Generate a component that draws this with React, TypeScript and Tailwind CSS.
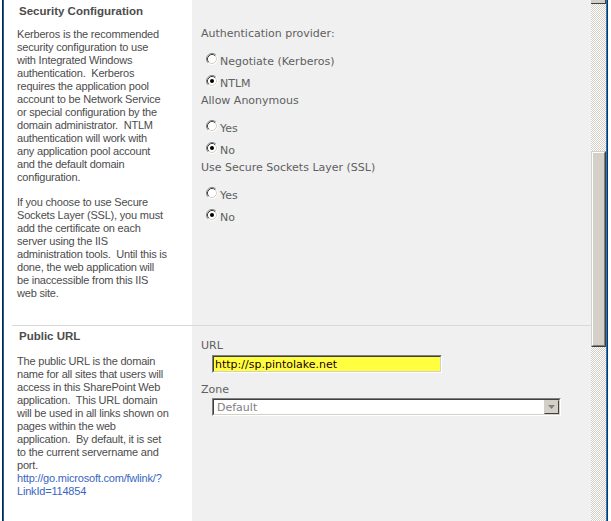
import React from "react";

const Radio = ({ checked }: { checked?: boolean }) => (
    <svg width="12" height="12" viewBox="0 0 12 12" className="-mt-[5px] shrink-0">
        <circle cx="6" cy="6" r="5" fill="#ffffff" />
        <path d="M2.11 9.89 A5.5 5.5 0 0 1 9.89 2.11" fill="none" stroke="#808080" strokeWidth="1" />
        <path d="M9.89 2.11 A5.5 5.5 0 0 1 2.11 9.89" fill="none" stroke="#ffffff" strokeWidth="1" />
        <path d="M2.82 9.18 A4.5 4.5 0 0 1 9.18 2.82" fill="none" stroke="#404040" strokeWidth="1" />
        <path d="M9.18 2.82 A4.5 4.5 0 0 1 2.82 9.18" fill="none" stroke="#d4d0c8" strokeWidth="1" />
        {checked && <circle cx="6" cy="6" r="2" fill="#000000" />}
    </svg>
);

const Option = ({ label, checked }: { label: string, checked?: boolean }) => (
    <div className="ml-[5px] flex h-[22px] items-center gap-[2px]">
        <Radio checked={checked} />
        <span className="leading-[13px]">{label}</span>
    </div>
);

const Label = ({ children }: { children: React.ReactNode }) => (
    <div className="mb-[10px] leading-[13px]">{children}</div>
);

const Lines = ({ lines }: { lines: string[] }) => (
    <>
        {lines.map((l, i) => (
            <div key={i} className="whitespace-pre">{l}</div>
        ))}
    </>
);

const Inset = ({ className, inner, children }: { className: string, inner: string, children: React.ReactNode }) => (
    <div className={`border border-t-[#808080] border-l-[#808080] border-b-white border-r-white ${className}`}>
        <div className={`flex h-full items-center border border-t-[#404040] border-l-[#404040] border-b-[#d4d0c8] border-r-[#d4d0c8] ${inner}`}>
            {children}
        </div>
    </div>
);

const Scrollbar = () => (
    <div className="flex w-[15px] flex-col">
        <div className="h-[4px] border-b border-r border-[#404040] bg-[#d4d0c8]" />
        <div className="h-[147px] bg-[image:repeating-conic-gradient(#d4d0c8_0%_25%,#ffffff_0%_50%)] bg-[length:2px_2px]" />
        <div className="h-[196px] border border-t-[#d4d0c8] border-l-[#d4d0c8] border-b-[#404040] border-r-[#404040]">
            <div className="h-full border border-t-white border-l-white border-b-[#808080] border-r-[#808080] bg-[#d4d0c8]" />
        </div>
        <div className="flex-1 bg-[image:repeating-conic-gradient(#d4d0c8_0%_25%,#ffffff_0%_50%)] bg-[length:2px_2px]" />
    </div>
);

export default function App() {
    const left = "font-['Liberation_Sans',Arial,sans-serif] text-[11px] leading-[13px] tracking-[-0.2px] text-[#4c4c4c]";
    const heading = "ml-[2px] text-[11.5px] font-bold tracking-normal text-[#4c4c4c]";
    const right = "flex-1 bg-[#f0f0f0] pl-[9px] font-['DejaVu_Sans',Verdana,sans-serif] text-[11px] text-[#5f5f5f]";

    return (
        <div className="flex h-[521px] w-[611px] overflow-hidden bg-white">
            <div className="w-[2px]" />
            <div className="w-px bg-[#0d2640]" />
            <div className="w-px bg-[#1f5e9c]" />

            <div className="flex w-[587px] flex-col">
                {/* security */}
                <div className="flex h-[325px]">
                    <div className={`w-[188px] pl-[13px] pt-[5px] ${left}`}>
                        <div className={`${heading} mb-[10px]`}>Security Configuration</div>
                        <Lines lines={[
                            "Kerberos is the recommended",
                            "security configuration to use",
                            "with Integrated Windows",
                            "authentication.  Kerberos",
                            "requires the application pool",
                            "account to be Network Service",
                            "or special configuration by the",
                            "domain administrator.  NTLM",
                            "authentication will work with",
                            "any application pool account",
                            "and the default domain",
                            "configuration.",
                        ]} />
                        <div className="mt-[12px]">
                            <Lines lines={[
                                "If you choose to use Secure",
                                "Sockets Layer (SSL), you must",
                                "add the certificate on each",
                                "server using the IIS",
                                "administration tools.  Until this is",
                                "done, the web application will",
                                "be inaccessible from this IIS",
                                "web site.",
                            ]} />
                        </div>
                    </div>
                    <div className={`${right} pt-[27px]`}>
                        <Label>Authentication provider:</Label>
                        <Option label="Negotiate (Kerberos)" />
                        <Option label="NTLM" checked />
                        <Label>Allow Anonymous</Label>
                        <Option label="Yes" />
                        <Option label="No" checked />
                        <Label>Use Secure Sockets Layer (SSL)</Label>
                        <Option label="Yes" />
                        <Option label="No" checked />
                    </div>
                </div>

                <div className="ml-[8px] h-px bg-[#d9d9d9]" />

                {/* public url */}
                <div className="flex flex-1">
                    <div className={`w-[188px] pl-[13px] pt-[4px] ${left}`}>
                        <div className={`${heading} mb-[12px]`}>Public URL</div>
                        <Lines lines={[
                            "The public URL is the domain",
                            "name for all sites that users will",
                            "access in this SharePoint Web",
                            "application.  This URL domain",
                            "will be used in all links shown on",
                            "pages within the web",
                            "application.  By default, it is set",
                            "to the current servername and",
                            "port.",
                        ]} />
                        <a href="#" className="block text-[#3966bf]">
                            <div>http://go.microsoft.com/fwlink/?</div>
                            <div>LinkId=114854</div>
                        </a>
                    </div>
                    <div className={`${right} pt-[13px]`}>
                        <div className="mb-[3px] leading-[13px]">URL</div>
                        <Inset className="ml-[11px] h-[18px] w-[230px]" inner="bg-[#ffff40] pl-[1px]">
                            <span className="leading-[13px] text-[#1a0000]">http://sp.pintolake.net</span>
                        </Inset>
                        <div className="mb-[2px] mt-[10px] leading-[13px]">Zone</div>
                        <Inset className="ml-[11px] h-[18px] w-[349px]" inner="bg-white pl-[3px]">
                            <span className="flex-1 leading-[13px] text-[#808080]">Default</span>
                            <div className="flex h-full w-[15px] items-center justify-center border border-t-[#d4d0c8] border-l-[#d4d0c8] border-b-[#404040] border-r-[#404040] bg-[#d4d0c8]">
                                <svg width="7" height="4" viewBox="0 0 7 4">
                                    <path d="M0 0 H7 L3.5 4 Z" fill="#808080" />
                                </svg>
                            </div>
                        </Inset>
                    </div>
                </div>
            </div>

            <Scrollbar />
            <div className="w-px bg-[#2b74c0]" />
            <div className="w-px bg-[#0c3a66]" />
            <div className="w-[3px]" />
        </div>
    );
}
